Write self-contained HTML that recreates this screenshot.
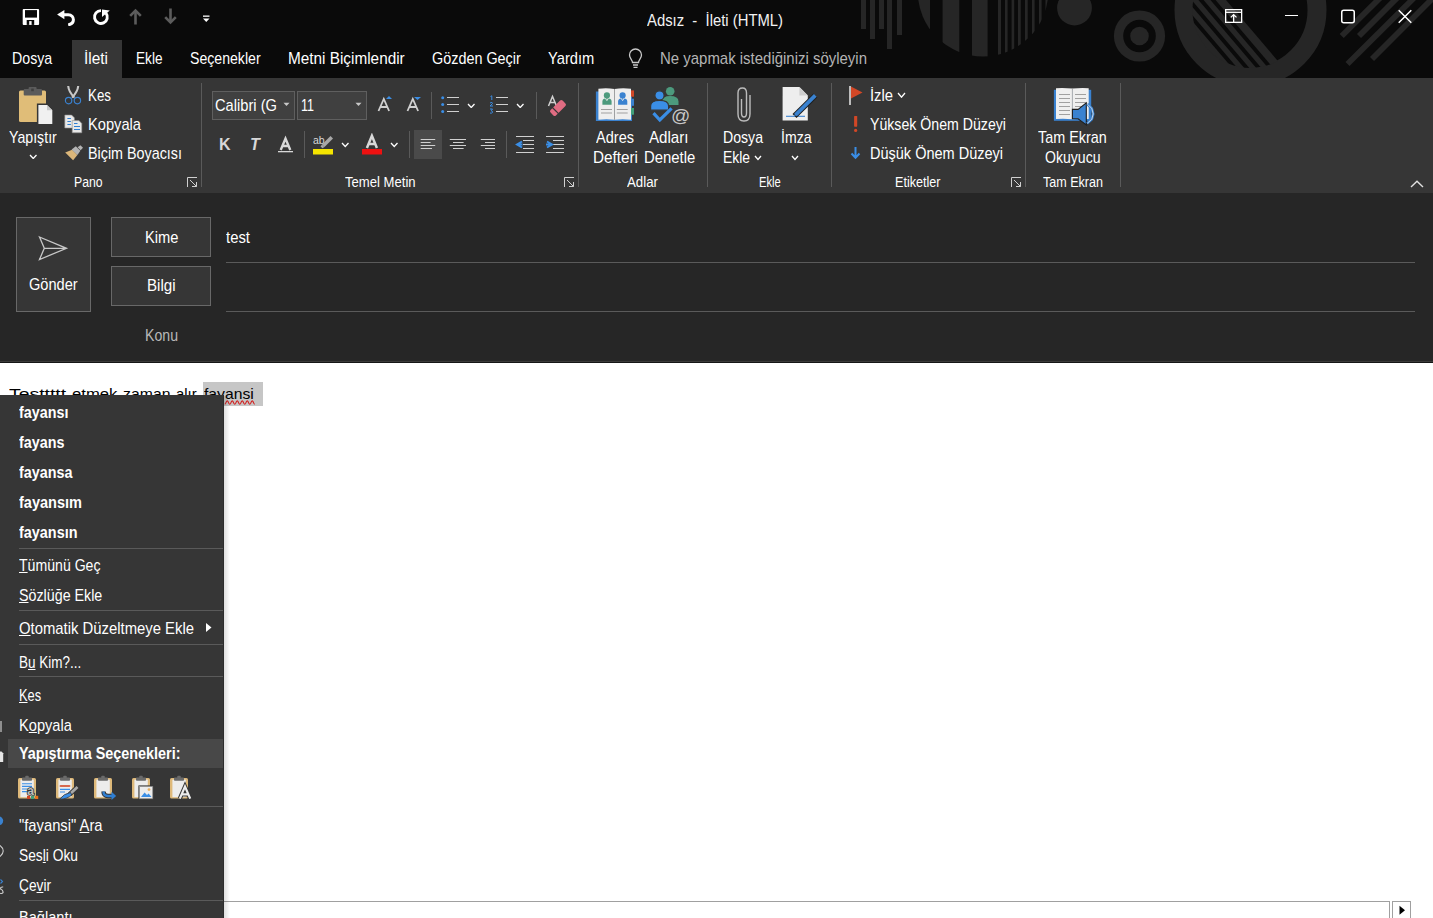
<!DOCTYPE html>
<html><head><meta charset="utf-8">
<style>
html,body{margin:0;padding:0;}
body{width:1433px;height:918px;overflow:hidden;position:relative;background:#fff;font-family:"Liberation Sans", sans-serif;}
.r{position:absolute;}
.t{position:absolute;white-space:pre;line-height:normal;transform-origin:0 0;}
</style></head><body>
<div class="r" style="left:0px;top:0px;width:1433px;height:78px;background:#0a0a0a;"></div>
<svg class="r" style="left:0px;top:0px;" width="1433" height="78" viewBox="0 0 1433 78">
<defs>
 <clipPath id="c1"><circle cx="983" cy="-8.8" r="65.3"></circle></clipPath>
 <clipPath id="c2"><circle cx="1250.5" cy="10" r="58"></circle></clipPath>
 <clipPath id="cb"><rect x="0" y="0" width="1433" height="78"></rect></clipPath>
</defs>
<g fill="#262626" clip-path="url(#cb)">
 <rect x="861" y="0" width="5" height="29"></rect>
 <rect x="870" y="0" width="5" height="39"></rect>
 <rect x="879" y="0" width="5" height="29"></rect>
 <rect x="887" y="0" width="5" height="49"></rect>
 <rect x="897" y="0" width="5" height="35"></rect>
 <g clip-path="url(#c1)">
  <rect x="915" y="-80" width="15" height="140"></rect>
  <rect x="942.6" y="-80" width="16.7" height="140"></rect>
  <rect x="972" y="-80" width="15.6" height="140"></rect>
  <rect x="998" y="-80" width="3" height="140"></rect>
  <rect x="1005" y="-80" width="2.6" height="140"></rect>
  <rect x="1011.6" y="-80" width="2.6" height="140"></rect>
  <rect x="1018" y="-80" width="2.8" height="140"></rect>
  <rect x="1025" y="-80" width="2.7" height="140"></rect>
  <rect x="1032" y="-80" width="2.6" height="140"></rect>
  <rect x="1039" y="-80" width="2.6" height="140"></rect>
  <rect x="1045.5" y="-80" width="3" height="140"></rect>
 </g>
 <circle cx="1074.5" cy="8" r="17.4"></circle>
 <circle cx="1139.5" cy="36" r="25.6"></circle>
 <circle cx="1139.5" cy="36" r="16.3" fill="#0a0a0a"></circle>
 <circle cx="1139.5" cy="36" r="9.3"></circle>
 <circle cx="1250.5" cy="10" r="66.5" fill="none" stroke="#262626" stroke-width="19"></circle>
 <g clip-path="url(#c2)">
  <path d="M1140 -10 L1217.5 -10 L1294.0 80 L1140 90Z" fill="#262626"></path>
  <g stroke="#0a0a0a" stroke-width="3.9">
   <line x1="1168.5" y1="-10" x2="1245" y2="80"></line>
   <line x1="1180.5" y1="-10" x2="1257" y2="80"></line>
   <line x1="1192.5" y1="-10" x2="1269" y2="80"></line>
   <line x1="1204.5" y1="-10" x2="1281" y2="80"></line>
  </g>
 </g>
 <g stroke="#262626" stroke-width="5.8">
  <line x1="1341.7" y1="36" x2="1380" y2="-2"></line>
  <line x1="1359" y1="36" x2="1398" y2="-3"></line>
  <line x1="1347.5" y1="64" x2="1440" y2="-28"></line>
  <line x1="1372" y1="59" x2="1440" y2="-9"></line>
 </g>
</g></svg>
<svg class="r" style="left:22px;top:8px;" width="18" height="18" viewBox="0 0 18 18"><path fill="#fff" d="M1.7 0.9H16.1a1 1 0 0 1 1 1V15.9a1 1 0 0 1-1 1H1.7a1 1 0 0 1-1-1V1.9a1 1 0 0 1 1-1z"></path>
<rect x="3" y="2.1" width="12" height="7.5" fill="#0a0a0a"></rect>
<rect x="4.7" y="12" width="7.5" height="4.9" fill="#0a0a0a"></rect>
<rect x="7.2" y="13.1" width="2.4" height="3.8" fill="#fff"></rect></svg>
<svg class="r" style="left:56px;top:8px;" width="20" height="18" viewBox="0 0 20 18"><path d="M1.1 6.6 L8.4 1.9 L8.4 11.2 Z" fill="#fff"></path>
<path d="M7 6.8 H12.3 C15.6 6.8 17.4 9.1 17.4 11.8 C17.4 14.6 15.4 16.3 12.2 16.9" fill="none" stroke="#fff" stroke-width="3"></path></svg>
<svg class="r" style="left:92px;top:8px;" width="20" height="18" viewBox="0 0 20 18"><path d="M9 2.6 A6.4 6.4 0 1 0 14 5.1" fill="none" stroke="#fff" stroke-width="2.9"></path>
<path d="M10 1.6 L17.8 2.6 L10 8.9 Z" fill="#fff"></path></svg>
<svg class="r" style="left:129px;top:8px;" width="14" height="17" viewBox="0 0 14 17"><g fill="none" stroke="#5c5c5c" stroke-width="2.6"><path d="M6.5 16.5V3"></path><path d="M1.2 7.8 L6.5 2.5 L11.8 7.8"></path></g></svg>
<svg class="r" style="left:164px;top:8px;" width="14" height="17" viewBox="0 0 14 17"><g fill="none" stroke="#5c5c5c" stroke-width="2.6"><path d="M6.5 0.5V14"></path><path d="M1.2 9.2 L6.5 14.5 L11.8 9.2"></path></g></svg>
<svg class="r" style="left:202px;top:14px;" width="9" height="9" viewBox="0 0 9 9"><rect x="1" y="1.5" width="6.5" height="1.3" fill="#fff"></rect><path d="M1 4.5H7.5L4.25 8z" fill="#fff"></path></svg>
<div class="t" style="left: 647px; top: 11.57px; font-size: 15.9px; color: rgb(242, 242, 242); transform: scaleX(0.9335);">Adsız  -  İleti (HTML)</div>
<svg class="r" style="left:1223px;top:8px;" width="21" height="17" viewBox="0 0 21 17"><g fill="none" stroke="#fff" stroke-width="1.3"><rect x="2.65" y="1.65" width="16" height="12.7"></rect><path d="M2.65 4.3H18.65"></path><path d="M10.65 14V6.6M7.8 9.4L10.65 6.6L13.5 9.4"></path></g></svg>
<div class="r" style="left:1284.5px;top:14.5px;width:13px;height:1.2px;background:#fff;"></div>
<svg class="r" style="left:1340px;top:9px;" width="16" height="15" viewBox="0 0 16 15"><rect x="1.75" y="1.25" width="12.5" height="12.5" rx="2" fill="none" stroke="#fff" stroke-width="1.5"></rect></svg>
<svg class="r" style="left:1397px;top:9px;" width="16" height="15" viewBox="0 0 16 15"><path d="M1.7 1.2 L14.3 13.8 M14.3 1.2 L1.7 13.8" stroke="#fff" stroke-width="1.5"></path></svg>
<div class="r" style="left:72px;top:40px;width:50px;height:38px;background:#363636;"></div>
<div class="t" style="left: 12.4px; top: 50.46px; font-size: 15.7px; color: rgb(255, 255, 255); transform: scaleX(0.904);">Dosya</div>
<div class="t" style="left: 84.4px; top: 50.46px; font-size: 15.7px; color: rgb(255, 255, 255); transform: scaleX(0.9827);">İleti</div>
<div class="t" style="left: 136.3px; top: 50.46px; font-size: 15.7px; color: rgb(255, 255, 255); transform: scaleX(0.868);">Ekle</div>
<div class="t" style="left: 190px; top: 50.46px; font-size: 15.7px; color: rgb(255, 255, 255); transform: scaleX(0.8995);">Seçenekler</div>
<div class="t" style="left: 288px; top: 50.46px; font-size: 15.7px; color: rgb(255, 255, 255); transform: scaleX(0.9771);">Metni Biçimlendir</div>
<div class="t" style="left: 431.8px; top: 50.46px; font-size: 15.7px; color: rgb(255, 255, 255); transform: scaleX(0.9174);">Gözden Geçir</div>
<div class="t" style="left: 548px; top: 50.46px; font-size: 15.7px; color: rgb(255, 255, 255); transform: scaleX(0.9371);">Yardım</div>
<svg class="r" style="left:626px;top:48px;" width="20" height="22" viewBox="0 0 20 22"><g fill="none" stroke="#c8c8c8" stroke-width="1.3"><path d="M6.5 14.5 C6.5 12 3.5 10.5 3.5 7 A6 6 0 0 1 15.5 7 C15.5 10.5 12.5 12 12.5 14.5 Z"></path><path d="M7 17H12M7.5 19.3H11.5"></path></g></svg>
<div class="t" style="left: 660.3px; top: 50.46px; font-size: 15.7px; color: rgb(180, 180, 180); transform: scaleX(0.9534);">Ne yapmak istediğinizi söyleyin</div>
<div class="r" style="left:0px;top:78px;width:1433px;height:115px;background:#363636;"></div>
<svg class="r" style="left:18px;top:86px;" width="36" height="40" viewBox="0 0 36 40">
<rect x="1" y="4.6" width="27" height="31.4" rx="1.5" fill="#e0bd78"></rect>
<rect x="5.7" y="3" width="18.3" height="6.4" rx="1" fill="#5b5b5b"></rect>
<rect x="10.6" y="1" width="8" height="5" rx="1" fill="#5b5b5b"></rect>
<rect x="13.2" y="2.6" width="2.6" height="2.6" fill="#404040"></rect>
<path d="M18.9 17.5 H29.5 L35.8 23.8 V39.5 H18.9 Z" fill="#363636"></path>
<path d="M20.4 19 H29 L34.3 24.3 V38 H20.4 Z" fill="#f0f0f0"></path>
<path d="M29 19 V24.3 H34.3" fill="#c8c8c8"></path></svg>
<div class="t" style="left: 8.7px; top: 128.56px; font-size: 15.7px; color: rgb(255, 255, 255); transform: scaleX(0.9035);">Yapıştır</div>
<svg class="r" style="left:29px;top:153.5px;" width="8.5" height="5.5" viewBox="0 0 8.5 5.5"><path d="M1 1 L4.25 4.5 L7.5 1" fill="none" stroke="#fff" stroke-width="1.3"></path></svg>
<svg class="r" style="left:64px;top:85px;" width="19" height="20" viewBox="0 0 19 20"><g fill="none">
<path d="M4.2 1 Q4.6 6.5 10.4 12.6" stroke="#c8c8c8" stroke-width="2.1"></path>
<path d="M14.2 1 Q13.8 6.5 8 12.6" stroke="#c8c8c8" stroke-width="2.1"></path>
<circle cx="4.6" cy="15.6" r="3.2" stroke="#3a82d0" stroke-width="1.15"></circle>
<circle cx="13.4" cy="15.6" r="3.2" stroke="#3a82d0" stroke-width="1.15"></circle></g></svg>
<div class="t" style="left: 88px; top: 86.86px; font-size: 15.7px; color: rgb(255, 255, 255); transform: scaleX(0.8504);">Kes</div>
<svg class="r" style="left:64px;top:114px;" width="20" height="20" viewBox="0 0 20 20">
<path d="M0.8 1 H7.6 L10.4 3.8 V14 H0.8 Z" fill="#e8e8e8" stroke="#8a8a8a" stroke-width="0.6"></path>
<path d="M3.4 4.5H6.9M3.4 7.5H6.9M3.4 10.5H6.9" stroke="#2f7fd3" stroke-width="1.1"></path>
<path d="M8.2 6.6 H15 L17.8 9.4 V18.8 H8.2 Z" fill="#e8e8e8" stroke="#8a8a8a" stroke-width="0.6"></path>
<path d="M10 9.5H13.5M10 12.5H16M10 15.5H16" stroke="#2f7fd3" stroke-width="1.1"></path></svg>
<div class="t" style="left: 88px; top: 115.96px; font-size: 15.7px; color: rgb(255, 255, 255); transform: scaleX(0.9347);">Kopyala</div>
<svg class="r" style="left:64px;top:144px;" width="20" height="18" viewBox="0 0 20 18">
<path d="M1.2 8.4 L8.2 5.8 L13.4 11 L9.1 16.3 Z" fill="#dcb77a"></path>
<path d="M7.6 5.4 L11.8 2.2 L16.4 6.8 L13.4 11 Z" fill="#b4b4b4"></path>
<path d="M13.6 3.2 L16.4 1.2 L19 3.8 L16.6 6.2 Z" fill="#b4b4b4"></path></svg>
<div class="t" style="left: 88px; top: 145.16px; font-size: 15.7px; color: rgb(255, 255, 255); transform: scaleX(0.9137);">Biçim Boyacısı</div>
<div class="t" style="left: 74px; top: 175.3px; font-size: 13.8px; color: rgb(255, 255, 255); transform: scaleX(0.8873);">Pano</div>
<svg class="r" style="left:187px;top:177px;" width="11" height="11" viewBox="0 0 11 11"><g fill="none" stroke="#d0d0d0" stroke-width="1"><path d="M0.5 10V0.5H10"></path><path d="M3 3L9.5 9.5M5 9.5H9.5V5"></path></g></svg>
<div class="r" style="left:201px;top:83px;width:1px;height:104px;background:#5a5a5a;"></div>
<div class="r" style="left:212px;top:91px;width:83px;height:29px;background:#404040;box-sizing:border-box;border:1px solid #5f5f5f;"></div>
<div class="r" style="left:297px;top:91px;width:70px;height:29px;background:#404040;box-sizing:border-box;border:1px solid #5f5f5f;"></div>
<div class="t" style="left: 215px; top: 96.76px; font-size: 15.7px; color: rgb(255, 255, 255); transform: scaleX(0.9358);">Calibri (G</div>
<svg class="r" style="left:283px;top:102px;" width="7" height="5" viewBox="0 0 7 5"><path d="M0.5 0.8H6.5L3.5 4z" fill="#c8c8c8"></path></svg>
<div class="t" style="left: 301px; top: 96.76px; font-size: 15.7px; color: rgb(255, 255, 255); transform: scaleX(0.7977);">11</div>
<svg class="r" style="left:354.5px;top:102px;" width="7" height="5" viewBox="0 0 7 5"><path d="M0.5 0.8H6.5L3.5 4z" fill="#c8c8c8"></path></svg>
<svg class="r" style="left:376px;top:94px;" width="18" height="19" viewBox="0 0 18 19"><path d="M2.5 17 L7.8 5 L13.1 17 M4.6 13H11" fill="none" stroke="#d0d0d0" stroke-width="1.8"></path><path d="M10 5H16L13 2z" fill="#3a8ee6"></path></svg>
<svg class="r" style="left:405px;top:94px;" width="18" height="19" viewBox="0 0 18 19"><path d="M2.5 17 L7.8 5 L13.1 17 M4.6 13H11" fill="none" stroke="#d0d0d0" stroke-width="1.8"></path><path d="M9 3H16L12.5 6z" fill="#3a8ee6"></path></svg>
<div class="r" style="left:431px;top:92px;width:1px;height:27px;background:#5a5a5a;"></div>
<svg class="r" style="left:440px;top:95px;" width="21" height="19" viewBox="0 0 21 19"><g fill="#3a8ee6"><circle cx="2.7" cy="2.8" r="1.5"></circle><circle cx="2.7" cy="9.6" r="1.5"></circle><circle cx="2.7" cy="16.4" r="1.5"></circle></g>
<path d="M7 2.5H19M7 9.5H19M7 16.5H19" stroke="#d0d0d0" stroke-width="1.1"></path></svg>
<svg class="r" style="left:467px;top:102.5px;" width="8.5" height="5.5" viewBox="0 0 8.5 5.5"><path d="M1 1 L4.25 4.5 L7.5 1" fill="none" stroke="#fff" stroke-width="1.3"></path></svg>
<svg class="r" style="left:488px;top:95px;" width="21" height="19" viewBox="0 0 21 19"><g fill="none" stroke="#3a8ee6" stroke-width="1"><path d="M2.5 1.5 L3.8 0.8 V5"></path><path d="M2 8 Q4.5 6.5 4.5 8.5 L2 11 H5"></path><path d="M2 14 H4.5 L3.2 15.8 Q5 16 4.4 17.6 Q3.5 18.6 2 18"></path></g>
<path d="M8 2.5H20M8 9.5H20M8 16.5H20" stroke="#d0d0d0" stroke-width="1.1"></path></svg>
<svg class="r" style="left:516px;top:102.5px;" width="8.5" height="5.5" viewBox="0 0 8.5 5.5"><path d="M1 1 L4.25 4.5 L7.5 1" fill="none" stroke="#fff" stroke-width="1.3"></path></svg>
<div class="r" style="left:536px;top:92px;width:1px;height:27px;background:#5a5a5a;"></div>
<svg class="r" style="left:546px;top:94px;" width="22" height="23" viewBox="0 0 22 23"><path d="M2.5 12 L6.5 2.5 L10.5 12 M4 8.5H9" fill="none" stroke="#d0d0d0" stroke-width="1.5"></path>
<g transform="rotate(45 12 14)"><rect x="8.2" y="5.5" width="7.6" height="17" rx="1.8" fill="#e06c82"></rect><rect x="7" y="17" width="10" height="1.2" fill="#363636"></rect></g></svg>
<svg class="r" style="left:217px;top:136px;" width="17" height="16" viewBox="0 0 17 16"><text x="2" y="14" font-family="Liberation Sans" font-weight="700" font-size="16" fill="#d8d8d8">K</text></svg>
<svg class="r" style="left:247px;top:136px;" width="17" height="16" viewBox="0 0 17 16"><text x="3" y="14" font-family="Liberation Sans" font-weight="700" font-style="italic" font-size="16" fill="#d8d8d8">T</text></svg>
<svg class="r" style="left:276px;top:135px;" width="20" height="19" viewBox="0 0 20 19"><path d="M4.7 15 L9.5 3.6 L14.3 15 M6.3 11H12.7" fill="none" stroke="#d8d8d8" stroke-width="2.4"></path><rect x="2" y="16" width="15" height="1.3" fill="#d8d8d8"></rect></svg>
<div class="r" style="left:304px;top:131px;width:1px;height:27px;background:#5a5a5a;"></div>
<svg class="r" style="left:312px;top:134px;" width="23" height="21" viewBox="0 0 23 21"><text x="1" y="9.5" font-family="Liberation Sans" font-size="10.5" fill="#d8d8d8">ab</text>
<path d="M18.5 2 L21 4.5 L12.5 13 L10 10.5 Z" fill="#a8a8a8"></path>
<path d="M10 10.5 L12.5 13 L10.5 14.2 L8.5 12.5Z" fill="#a8a8a8"></path>
<rect x="1" y="15" width="20" height="5.5" fill="#f4e400"></rect></svg>
<svg class="r" style="left:341px;top:142px;" width="8.5" height="5.5" viewBox="0 0 8.5 5.5"><path d="M1 1 L4.25 4.5 L7.5 1" fill="none" stroke="#fff" stroke-width="1.3"></path></svg>
<svg class="r" style="left:360px;top:133px;" width="24" height="22" viewBox="0 0 24 22"><path d="M6.9 15 L11.9 2.8 L16.9 15 M8.7 10.9H15.1" fill="none" stroke="#d8d8d8" stroke-width="2.5"></path>
<rect x="2" y="16" width="20" height="5.5" fill="#ee1111"></rect></svg>
<svg class="r" style="left:390px;top:142px;" width="8.5" height="5.5" viewBox="0 0 8.5 5.5"><path d="M1 1 L4.25 4.5 L7.5 1" fill="none" stroke="#fff" stroke-width="1.3"></path></svg>
<div class="r" style="left:409px;top:131px;width:1px;height:27px;background:#5a5a5a;"></div>
<div class="r" style="left:414px;top:130px;width:28px;height:28.6px;background:#4a4a4a;"></div>
<svg class="r" style="left:420px;top:137px;" width="17" height="16" viewBox="0 0 17 16"><path d="M0.7 2.5H15.2M0.7 5.5H10.6M0.7 8.5H15.2M0.7 11.5H12" stroke="#d0d0d0" stroke-width="1.1"></path></svg>
<svg class="r" style="left:449px;top:137px;" width="18" height="16" viewBox="0 0 18 16"><path d="M0.8 2.5H17M4 5.5H14.6M0.8 8.5H17M4 11.5H14.6" stroke="#d0d0d0" stroke-width="1.1"></path></svg>
<svg class="r" style="left:480px;top:137px;" width="17" height="16" viewBox="0 0 17 16"><path d="M0.8 2.5H15M5 5.5H15M0.8 8.5H15M5 11.5H15" stroke="#d0d0d0" stroke-width="1.1"></path></svg>
<div class="r" style="left:506px;top:131px;width:1px;height:27px;background:#5a5a5a;"></div>
<svg class="r" style="left:515px;top:135px;" width="20" height="19" viewBox="0 0 20 19"><path d="M1 1.5H19M8 5.5H19M8 9.5H19M8 13.5H19M1 17.5H19" stroke="#d0d0d0" stroke-width="1.2"></path>
<path d="M7 6.5 L2 9.5 L7 12.5 M2.5 9.5H7.5" fill="none" stroke="#3a8ee6" stroke-width="2"></path></svg>
<svg class="r" style="left:545px;top:135px;" width="20" height="19" viewBox="0 0 20 19"><path d="M1 1.5H19M8 5.5H19M8 9.5H19M8 13.5H19M1 17.5H19" stroke="#d0d0d0" stroke-width="1.2"></path>
<path d="M2 6.5 L7 9.5 L2 12.5 M1 9.5H6" fill="none" stroke="#3a8ee6" stroke-width="2"></path></svg>
<div class="t" style="left: 345px; top: 175.3px; font-size: 13.8px; color: rgb(255, 255, 255); transform: scaleX(0.9492);">Temel Metin</div>
<svg class="r" style="left:563.5px;top:177px;" width="11" height="11" viewBox="0 0 11 11"><g fill="none" stroke="#d0d0d0" stroke-width="1"><path d="M0.5 10V0.5H10"></path><path d="M3 3L9.5 9.5M5 9.5H9.5V5"></path></g></svg>
<div class="r" style="left:578px;top:83px;width:1px;height:104px;background:#5a5a5a;"></div>
<svg class="r" style="left:594px;top:86px;" width="42" height="37" viewBox="0 0 42 37">
<path d="M1.9 5.5 H38 V35 H1.9Z" fill="#3a82d0"></path>
<path d="M4.4 2.8 Q12.5 1.8 20.5 3 V33.7 Q12.5 32.6 4.4 33.7Z" fill="#eeeeee"></path>
<path d="M20.5 3 Q28.5 1.8 37 2.8 V33.7 Q28.5 32.6 20.5 33.7Z" fill="#eeeeee"></path>
<path d="M20.5 3 V33.7" stroke="#9a9a9a" stroke-width="0.9"></path>
<rect x="37" y="4.4" width="3" height="6.3" fill="#d24726"></rect>
<rect x="37" y="12.7" width="3" height="7.1" fill="#3a82d0"></rect>
<rect x="37" y="22" width="3" height="6.7" fill="#41a07a"></rect>
<circle cx="12.9" cy="9.4" r="3.1" fill="#4c9a7d"></circle><path d="M8.4 18.8 V15.5 Q8.4 12.2 12.9 12.2 Q17.6 12.2 17.6 15.5 V18.8Z" fill="#4c9a7d"></path>
<path d="M11.4 12.3 L12.9 14.6 L14.4 12.3" fill="none" stroke="#eeeeee" stroke-width="0.9"></path>
<circle cx="28.6" cy="9.4" r="3.1" fill="#3a82d0"></circle><path d="M24.1 18.8 V15.5 Q24.1 12.2 28.6 12.2 Q33.3 12.2 33.3 15.5 V18.8Z" fill="#3a82d0"></path>
<path d="M27.1 12.3 L28.6 14.6 L30.1 12.3" fill="none" stroke="#eeeeee" stroke-width="0.9"></path>
<path d="M7 23.5H18M7 27H18M22.8 23.5H33.7M22.8 27H33.7" stroke="#a0a0a0" stroke-width="1"></path></svg>
<svg class="r" style="left:649px;top:85px;" width="42" height="41" viewBox="0 0 42 41">
<circle cx="21.2" cy="6.2" r="4.3" fill="#4c9a7d"></circle><path d="M13.2 20 V16.5 Q13.2 11 21.2 11 Q29.5 11 29.5 16.5 V20Z" fill="#4c9a7d"></path>
<circle cx="10.5" cy="10.4" r="4.6" fill="#3a8ee6" stroke="#363636" stroke-width="1.2"></circle>
<path d="M1.6 25.2 V21 Q1.6 15.4 10.5 15.4 Q19.6 15.4 19.6 21 V25.2Z" fill="#3a8ee6" stroke="#363636" stroke-width="1.2"></path>
<path d="M4.5 28.2 L10.8 35 L22.6 23.4" fill="none" stroke="#3a8ee6" stroke-width="3.2"></path>
<text x="22" y="37.3" font-family="Liberation Sans" font-size="19" fill="#c8c8c8">@</text></svg>
<div class="t" style="left: 596px; top: 128.56px; font-size: 15.7px; color: rgb(255, 255, 255); transform: scaleX(0.9272);">Adres</div>
<div class="t" style="left: 592.7px; top: 148.56px; font-size: 15.7px; color: rgb(255, 255, 255); transform: scaleX(0.9736);">Defteri</div>
<div class="t" style="left: 649px; top: 128.56px; font-size: 15.7px; color: rgb(255, 255, 255); transform: scaleX(0.9638);">Adları</div>
<div class="t" style="left: 643.5px; top: 148.56px; font-size: 15.7px; color: rgb(255, 255, 255); transform: scaleX(0.9468);">Denetle</div>
<div class="t" style="left: 627px; top: 175.3px; font-size: 13.8px; color: rgb(255, 255, 255); transform: scaleX(0.9622);">Adlar</div>
<div class="r" style="left:707px;top:83px;width:1px;height:104px;background:#5a5a5a;"></div>
<svg class="r" style="left:735px;top:86px;" width="18" height="38" viewBox="0 0 18 38"><path d="M6.5 13 V27 Q6.5 31 9 31 Q11.5 31 11.5 27 V7 Q11.5 2 7.5 2 Q3 2 3 7 V28 Q3 35 9 35 Q15 35 15 28 V9" fill="none" stroke="#bcbcbc" stroke-width="1.4"></path></svg>
<div class="t" style="left: 723px; top: 128.56px; font-size: 15.7px; color: rgb(255, 255, 255); transform: scaleX(0.8995);">Dosya</div>
<div class="t" style="left: 723px; top: 148.56px; font-size: 15.7px; color: rgb(255, 255, 255); transform: scaleX(0.8843);">Ekle</div>
<svg class="r" style="left:753.5px;top:155px;" width="8" height="5.5" viewBox="0 0 8 5.5"><path d="M1 1 L4.0 4.5 L7 1" fill="none" stroke="#fff" stroke-width="1.3"></path></svg>
<svg class="r" style="left:782px;top:86px;" width="36" height="37" viewBox="0 0 36 37">
<path d="M0.6 1 H17.4 L25.8 9.4 V34.5 H0.6Z" fill="#eeeeee"></path>
<path d="M17.4 1 V9.4 H25.8" fill="#cfcfcf"></path>
<path d="M4 30.3 H23" stroke="#3a82d0" stroke-width="1.1"></path>
<path d="M33.3 9.4 L12.5 30" stroke="#1e1e1e" stroke-width="5.6"></path>
<path d="M33.3 9.4 L13.5 29" stroke="#3a82d0" stroke-width="3.8"></path>
<path d="M14.5 25.6 L17 28.1 L11.5 30.6Z" fill="#3a82d0"></path></svg>
<div class="t" style="left: 780.5px; top: 128.56px; font-size: 15.7px; color: rgb(255, 255, 255); transform: scaleX(0.8971);">İmza</div>
<svg class="r" style="left:791px;top:155px;" width="8" height="5.5" viewBox="0 0 8 5.5"><path d="M1 1 L4.0 4.5 L7 1" fill="none" stroke="#fff" stroke-width="1.3"></path></svg>
<div class="t" style="left: 758.7px; top: 175.3px; font-size: 13.8px; color: rgb(255, 255, 255); transform: scaleX(0.8121);">Ekle</div>
<div class="r" style="left:831px;top:83px;width:1px;height:104px;background:#5a5a5a;"></div>
<svg class="r" style="left:847px;top:85px;" width="18" height="21" viewBox="0 0 18 21"><rect x="2" y="1" width="2" height="19" fill="#bcbcbc"></rect><path d="M4 1.5 L15.5 7.5 L4 13.5Z" fill="#d24726"></path></svg>
<div class="t" style="left: 870px; top: 86.96px; font-size: 15.7px; color: rgb(255, 255, 255); transform: scaleX(0.9418);">İzle</div>
<svg class="r" style="left:896.5px;top:91.5px;" width="9" height="6.2" viewBox="0 0 9 6.2"><path d="M1 1 L4.5 5.2 L8 1" fill="none" stroke="#fff" stroke-width="1.3"></path></svg>
<svg class="r" style="left:852px;top:115px;" width="7" height="18" viewBox="0 0 7 18"><rect x="2.1" y="1" width="3.1" height="10.7" rx="0.6" fill="#d24726"></rect><circle cx="3.65" cy="15.4" r="1.6" fill="#d24726"></circle></svg>
<div class="t" style="left: 870px; top: 115.86px; font-size: 15.7px; color: rgb(255, 255, 255); transform: scaleX(0.9016);">Yüksek Önem Düzeyi</div>
<svg class="r" style="left:850px;top:146px;" width="11" height="14" viewBox="0 0 11 14"><path d="M5.5 1V11.5M1.5 7.5L5.5 11.8L9.5 7.5" fill="none" stroke="#3a8ee6" stroke-width="2"></path></svg>
<div class="t" style="left: 870px; top: 144.76px; font-size: 15.7px; color: rgb(255, 255, 255); transform: scaleX(0.9245);">Düşük Önem Düzeyi</div>
<div class="t" style="left: 895px; top: 175.3px; font-size: 13.8px; color: rgb(255, 255, 255); transform: scaleX(0.9129);">Etiketler</div>
<svg class="r" style="left:1010.5px;top:177px;" width="11" height="11" viewBox="0 0 11 11"><g fill="none" stroke="#d0d0d0" stroke-width="1"><path d="M0.5 10V0.5H10"></path><path d="M3 3L9.5 9.5M5 9.5H9.5V5"></path></g></svg>
<div class="r" style="left:1025px;top:83px;width:1px;height:104px;background:#5a5a5a;"></div>
<svg class="r" style="left:1052px;top:85px;" width="44" height="42" viewBox="0 0 44 42">
<rect x="1.9" y="4.8" width="37.3" height="31" fill="#3a82d0"></rect>
<path d="M4 3.2 Q12 2.6 20.4 3.6 V34.2 Q12 33.4 4 34Z" fill="#efefef"></path>
<path d="M20.4 3.6 Q28.5 2.6 36.7 3.2 V34 Q28.5 33.4 20.4 34.2Z" fill="#efefef"></path>
<path d="M20.4 3.6V34" stroke="#a8a8a8" stroke-width="0.9"></path>
<path d="M7 9.5H18M7 13.5H18M7 17.5H18M7 21.5H18M7 25.5H18M7 29.5H18M23 9.5H34M23 13.5H34M23 17.5H34M23 21.5H34" stroke="#a0a0a0" stroke-width="1"></path>
<path d="M20.4 24.4 H26.1 L34.3 17.9 V39.9 L26.1 33.7 H20.4Z" fill="#3a82d0" stroke="#1e1e1e" stroke-width="1.1"></path>
<path d="M35.2 19 L39.8 23.4 L41.2 28.9 L39.8 34.2 L35.2 38.4" fill="none" stroke="#3a82d0" stroke-width="2.6"></path>
<path d="M35.2 19 L39.8 23.4 L41.2 28.9 L39.8 34.2 L35.2 38.4" fill="none" stroke="#e8e8e8" stroke-width="0.8"></path></svg>
<div class="t" style="left: 1038px; top: 128.56px; font-size: 15.7px; color: rgb(255, 255, 255); transform: scaleX(0.9162);">Tam Ekran</div>
<div class="t" style="left: 1045px; top: 148.56px; font-size: 15.7px; color: rgb(255, 255, 255); transform: scaleX(0.8963);">Okuyucu</div>
<div class="t" style="left: 1042.5px; top: 175.3px; font-size: 13.8px; color: rgb(255, 255, 255); transform: scaleX(0.9097);">Tam Ekran</div>
<div class="r" style="left:1120px;top:83px;width:1px;height:104px;background:#5a5a5a;"></div>
<svg class="r" style="left:1410px;top:180px;" width="14" height="8" viewBox="0 0 14 8"><path d="M1 7 L7 1.2 L13 7" fill="none" stroke="#e0e0e0" stroke-width="1.4"></path></svg>
<div class="r" style="left:0px;top:193px;width:1433px;height:168px;background:#262626;"></div>
<div class="r" style="left:0px;top:361px;width:1433px;height:1px;background:#3b3a39;"></div>
<div class="r" style="left:0px;top:362px;width:1433px;height:1px;background:#161616;"></div>
<div class="r" style="left:16px;top:217px;width:75px;height:95px;background:#363636;box-sizing:border-box;border:1px solid #686868;"></div>
<svg class="r" style="left:37px;top:235px;" width="32" height="27" viewBox="0 0 32 27"><path d="M2.5 2 L29.5 13.3 L2.5 24.5 L7.3 13.3 Z M7.3 13.3 H29.5" fill="none" stroke="#c8c8c8" stroke-width="1.3" stroke-linejoin="miter"></path></svg>
<div class="t" style="left: 29px; top: 275.56px; font-size: 15.7px; color: rgb(255, 255, 255); transform: scaleX(0.9307);">Gönder</div>
<div class="r" style="left:111px;top:217px;width:100px;height:40px;background:#363636;box-sizing:border-box;border:1px solid #686868;"></div>
<div class="r" style="left:111px;top:266px;width:100px;height:40px;background:#363636;box-sizing:border-box;border:1px solid #686868;"></div>
<div class="t" style="left: 144.5px; top: 228.56px; font-size: 15.7px; color: rgb(255, 255, 255); transform: scaleX(0.9371);">Kime</div>
<div class="t" style="left: 146.7px; top: 277.16px; font-size: 15.7px; color: rgb(255, 255, 255); transform: scaleX(0.9644);">Bilgi</div>
<div class="t" style="left: 144.5px; top: 326.86px; font-size: 15.7px; color: rgb(184, 184, 184); transform: scaleX(0.9006);">Konu</div>
<div class="t" style="left: 226px; top: 228.96px; font-size: 15.7px; color: rgb(255, 255, 255); transform: scaleX(0.9487);">test</div>
<div class="r" style="left:226px;top:262px;width:1189px;height:1.2px;background:#5a5a5a;"></div>
<div class="r" style="left:226px;top:311px;width:1189px;height:1.2px;background:#5a5a5a;"></div>
<div class="r" style="left:203px;top:382px;width:60px;height:24px;background:#c6c6c6;"></div>
<div class="t" style="left: 9.3px; top: 386.17px; font-size: 14.6px; color: rgb(0, 0, 0); transform: scaleX(1.3284);">Testtttt</div>
<div class="t" style="left: 71.8px; top: 386.17px; font-size: 14.6px; color: rgb(0, 0, 0); transform: scaleX(1.1421);">etmek</div>
<div class="t" style="left: 122.5px; top: 386.17px; font-size: 14.6px; color: rgb(0, 0, 0); transform: scaleX(1.0842);">zaman</div>
<div class="t" style="left: 176px; top: 386.17px; font-size: 14.6px; color: rgb(0, 0, 0); transform: scaleX(1.0206);">alır</div>
<div class="t" style="left: 203.8px; top: 386.17px; font-size: 14.6px; color: rgb(0, 0, 0); transform: scaleX(1.0768);">fayansi</div>
<svg class="r" style="left:224px;top:399px;" width="33" height="7" viewBox="0 0 33 7"><path d="M0.80 5.10 L0.90 5.07 L1.00 5.02 L1.10 4.95 L1.20 4.85 L1.30 4.73 L1.40 4.60 L1.50 4.44 L1.60 4.27 L1.70 4.09 L1.80 3.90 L1.90 3.70 L2.00 3.50 L2.10 3.30 L2.20 3.10 L2.30 2.91 L2.40 2.73 L2.50 2.56 L2.60 2.40 L2.70 2.27 L2.80 2.15 L2.90 2.05 L3.00 1.98 L3.10 1.93 L3.20 1.90 L3.30 1.90 L3.40 1.93 L3.50 1.98 L3.60 2.05 L3.70 2.15 L3.80 2.27 L3.90 2.40 L4.00 2.56 L4.10 2.73 L4.20 2.91 L4.30 3.10 L4.40 3.30 L4.50 3.50 L4.60 3.70 L4.70 3.90 L4.80 4.09 L4.90 4.27 L5.00 4.44 L5.10 4.60 L5.20 4.73 L5.30 4.85 L5.40 4.95 L5.50 5.02 L5.60 5.07 L5.70 5.10 L5.80 5.10 L5.90 5.07 L6.00 5.02 L6.10 4.95 L6.20 4.85 L6.30 4.73 L6.40 4.60 L6.50 4.44 L6.60 4.27 L6.70 4.09 L6.80 3.90 L6.90 3.70 L7.00 3.50 L7.10 3.30 L7.20 3.10 L7.30 2.91 L7.40 2.73 L7.50 2.56 L7.60 2.40 L7.70 2.27 L7.80 2.15 L7.90 2.05 L8.00 1.98 L8.10 1.93 L8.20 1.90 L8.30 1.90 L8.40 1.93 L8.50 1.98 L8.60 2.05 L8.70 2.15 L8.80 2.27 L8.90 2.40 L9.00 2.56 L9.10 2.73 L9.20 2.91 L9.30 3.10 L9.40 3.30 L9.50 3.50 L9.60 3.70 L9.70 3.90 L9.80 4.09 L9.90 4.27 L10.00 4.44 L10.10 4.60 L10.20 4.73 L10.30 4.85 L10.40 4.95 L10.50 5.02 L10.60 5.07 L10.70 5.10 L10.80 5.10 L10.90 5.07 L11.00 5.02 L11.10 4.95 L11.20 4.85 L11.30 4.73 L11.40 4.60 L11.50 4.44 L11.60 4.27 L11.70 4.09 L11.80 3.90 L11.90 3.70 L12.00 3.50 L12.10 3.30 L12.20 3.10 L12.30 2.91 L12.40 2.73 L12.50 2.56 L12.60 2.40 L12.70 2.27 L12.80 2.15 L12.90 2.05 L13.00 1.98 L13.10 1.93 L13.20 1.90 L13.30 1.90 L13.40 1.93 L13.50 1.98 L13.60 2.05 L13.70 2.15 L13.80 2.27 L13.90 2.40 L14.00 2.56 L14.10 2.73 L14.20 2.91 L14.30 3.10 L14.40 3.30 L14.50 3.50 L14.60 3.70 L14.70 3.90 L14.80 4.09 L14.90 4.27 L15.00 4.44 L15.10 4.60 L15.20 4.73 L15.30 4.85 L15.40 4.95 L15.50 5.02 L15.60 5.07 L15.70 5.10 L15.80 5.10 L15.90 5.07 L16.00 5.02 L16.10 4.95 L16.20 4.85 L16.30 4.73 L16.40 4.60 L16.50 4.44 L16.60 4.27 L16.70 4.09 L16.80 3.90 L16.90 3.70 L17.00 3.50 L17.10 3.30 L17.20 3.10 L17.30 2.91 L17.40 2.73 L17.50 2.56 L17.60 2.40 L17.70 2.27 L17.80 2.15 L17.90 2.05 L18.00 1.98 L18.10 1.93 L18.20 1.90 L18.30 1.90 L18.40 1.93 L18.50 1.98 L18.60 2.05 L18.70 2.15 L18.80 2.27 L18.90 2.40 L19.00 2.56 L19.10 2.73 L19.20 2.91 L19.30 3.10 L19.40 3.30 L19.50 3.50 L19.60 3.70 L19.70 3.90 L19.80 4.09 L19.90 4.27 L20.00 4.44 L20.10 4.60 L20.20 4.73 L20.30 4.85 L20.40 4.95 L20.50 5.02 L20.60 5.07 L20.70 5.10 L20.80 5.10 L20.90 5.07 L21.00 5.02 L21.10 4.95 L21.20 4.85 L21.30 4.73 L21.40 4.60 L21.50 4.44 L21.60 4.27 L21.70 4.09 L21.80 3.90 L21.90 3.70 L22.00 3.50 L22.10 3.30 L22.20 3.10 L22.30 2.91 L22.40 2.73 L22.50 2.56 L22.60 2.40 L22.70 2.27 L22.80 2.15 L22.90 2.05 L23.00 1.98 L23.10 1.93 L23.20 1.90 L23.30 1.90 L23.40 1.93 L23.50 1.98 L23.60 2.05 L23.70 2.15 L23.80 2.27 L23.90 2.40 L24.00 2.56 L24.10 2.73 L24.20 2.91 L24.30 3.10 L24.40 3.30 L24.50 3.50 L24.60 3.70 L24.70 3.90 L24.80 4.09 L24.90 4.27 L25.00 4.44 L25.10 4.60 L25.20 4.73 L25.30 4.85 L25.40 4.95 L25.50 5.02 L25.60 5.07 L25.70 5.10 L25.80 5.10 L25.90 5.07 L26.00 5.02 L26.10 4.95 L26.20 4.85 L26.30 4.73 L26.40 4.60 L26.50 4.44 L26.60 4.27 L26.70 4.09 L26.80 3.90 L26.90 3.70 L27.00 3.50 L27.10 3.30 L27.20 3.10 L27.30 2.91 L27.40 2.73 L27.50 2.56 L27.60 2.40 L27.70 2.27 L27.80 2.15 L27.90 2.05 L28.00 1.98 L28.10 1.93 L28.20 1.90 L28.30 1.90 L28.40 1.93 L28.50 1.98 L28.60 2.05 L28.70 2.15 L28.80 2.27 L28.90 2.40 L29.00 2.56 L29.10 2.73 L29.20 2.91 L29.30 3.10 L29.40 3.30 L29.50 3.50 L29.60 3.70 L29.70 3.90 L29.80 4.09 L29.90 4.27 L30.00 4.44 L30.10 4.60 L30.20 4.73 L30.30 4.85 L30.40 4.95 L30.50 5.02 L30.60 5.07 L30.70 5.10 L30.80 5.10" fill="none" stroke="#d42020" stroke-width="1.1"></path></svg>
<div class="r" style="left:224px;top:901px;width:1166px;height:1px;background:#a0a0a0;"></div>
<div class="r" style="left:1389px;top:901px;width:1px;height:17px;background:#a0a0a0;"></div>
<div class="r" style="left:1392px;top:901px;width:19px;height:17px;background:#fff;box-sizing:border-box;border:1px solid #a0a0a0;border-bottom:none;"></div>
<svg class="r" style="left:1398px;top:905px;" width="9" height="11" viewBox="0 0 9 11"><path d="M1.5 0.8 L7 5.3 L1.5 9.8Z" fill="#000"></path></svg>
<div class="r" style="left:224px;top:396px;width:6px;height:522px;background:linear-gradient(to right, rgba(0,0,0,0.13), rgba(0,0,0,0));"></div>
<div class="r" style="left:0px;top:395px;width:224px;height:523px;background:#363636;"></div>
<div class="r" style="left:223px;top:395px;width:1px;height:523px;background:#2c2c2c;"></div>
<div class="t" style="left: 18.5px; top: 404.16px; font-size: 15.7px; color: rgb(255, 255, 255); font-weight: 700; transform: scaleX(0.9135);">fayansı</div>
<div class="t" style="left: 18.5px; top: 434.16px; font-size: 15.7px; color: rgb(255, 255, 255); font-weight: 700; transform: scaleX(0.9151);">fayans</div>
<div class="t" style="left: 18.5px; top: 464.16px; font-size: 15.7px; color: rgb(255, 255, 255); font-weight: 700; transform: scaleX(0.9155);">fayansa</div>
<div class="t" style="left: 18.5px; top: 494.16px; font-size: 15.7px; color: rgb(255, 255, 255); font-weight: 700; transform: scaleX(0.9263);">fayansım</div>
<div class="t" style="left: 18.5px; top: 524.16px; font-size: 15.7px; color: rgb(255, 255, 255); font-weight: 700; transform: scaleX(0.919);">fayansın</div>
<div class="r" style="left:19px;top:547.5px;width:204px;height:1px;background:#5a5a5a;"></div>
<div class="t" style="left: 18.5px; top: 557.16px; font-size: 15.7px; color: rgb(255, 255, 255); transform: scaleX(0.8985);"><u>T</u>ümünü Geç</div>
<div class="t" style="left: 18.5px; top: 587.16px; font-size: 15.7px; color: rgb(255, 255, 255); transform: scaleX(0.9096);"><u>S</u>özlüğe Ekle</div>
<div class="r" style="left:19px;top:610px;width:204px;height:1px;background:#5a5a5a;"></div>
<div class="t" style="left: 18.5px; top: 620.06px; font-size: 15.7px; color: rgb(255, 255, 255); transform: scaleX(0.9468);"><u>O</u>tomatik Düzeltmeye Ekle</div>
<svg class="r" style="left:205px;top:622px;" width="8" height="12" viewBox="0 0 8 12"><path d="M1 1 L6.5 5.5 L1 10Z" fill="#fff"></path></svg>
<div class="r" style="left:19px;top:643.5px;width:204px;height:1px;background:#5a5a5a;"></div>
<div class="t" style="left: 18.5px; top: 653.56px; font-size: 15.7px; color: rgb(255, 255, 255); transform: scaleX(0.8592);">B<u>u</u> Kim?...</div>
<div class="r" style="left:19px;top:676px;width:204px;height:1px;background:#5a5a5a;"></div>
<div class="t" style="left: 18.5px; top: 686.56px; font-size: 15.7px; color: rgb(255, 255, 255); transform: scaleX(0.8171);"><u>K</u>es</div>
<div class="t" style="left: 18.5px; top: 716.76px; font-size: 15.7px; color: rgb(255, 255, 255); transform: scaleX(0.9327);">K<u>o</u>pyala</div>
<div class="r" style="left:8px;top:739px;width:215px;height:29px;background:#484848;"></div>
<div class="t" style="left: 18.5px; top: 745.26px; font-size: 15.7px; color: rgb(255, 255, 255); font-weight: 700; transform: scaleX(0.9168);">Yapıştırma Seçenekleri:</div>
<svg class="r" style="left:17px;top:775px;" width="26" height="26" viewBox="0 0 26 26">
<rect x="1" y="3" width="18" height="20.5" rx="1.6" fill="#deb97a"></rect>
<rect x="3.4" y="4.6" width="13.4" height="17.6" fill="#ececec"></rect>
<rect x="5" y="2.4" width="10" height="3.4" rx="0.8" fill="#6a6a6a"></rect>
<rect x="8.2" y="0.8" width="3.6" height="2.6" rx="1" fill="#6a6a6a"></rect>
<path d="M5 8.8H15M5 11.4H15M5 14H15M5 16.6H11" stroke="#3a8ee6" stroke-width="1.1"></path>
<text x="10.2" y="19.8" font-family="Liberation Sans" font-weight="700" font-size="12" fill="#bdbdbd" stroke="#363636" stroke-width="1.6" paint-order="stroke">a</text>
<rect x="10" y="20.8" width="3.2" height="3.2" fill="#d24726"></rect><rect x="14" y="20.8" width="3.2" height="3.2" fill="#41a07a"></rect><rect x="18" y="20.8" width="3.2" height="3.2" fill="#e8731c"></rect></svg>
<svg class="r" style="left:55px;top:775px;" width="26" height="26" viewBox="0 0 26 26">
<rect x="1" y="3" width="18" height="20.5" rx="1.6" fill="#deb97a"></rect>
<rect x="3.4" y="4.6" width="13.4" height="17.6" fill="#ececec"></rect>
<rect x="5" y="2.4" width="10" height="3.4" rx="0.8" fill="#6a6a6a"></rect>
<rect x="8.2" y="0.8" width="3.6" height="2.6" rx="1" fill="#6a6a6a"></rect>
<path d="M5 14.4H15M5 17H10" stroke="#3a8ee6" stroke-width="1.1"></path>
<path d="M5 10.2 L6 11.8 L7 10.2 L8 11.8 L9 10.2 L10 11.8 L11 10.2 L12 11.8 L13 10.2 L14 11.8 L15 10.2 M5 11.8 L6 10.2 L7 11.8 L8 10.2 L9 11.8 L10 10.2 L11 11.8 L12 10.2 L13 11.8 L14 10.2 L15 11.8" stroke="#d24726" stroke-width="0.8" fill="none"></path>
<path d="M22.5 12 L14.5 19.5" stroke="#363636" stroke-width="4.6"></path>
<path d="M22.5 12 L14.5 19.5" stroke="#a8a8a8" stroke-width="2.8"></path>
<path d="M15.5 17.5 Q9 18.5 4.5 24.2 Q12 24.2 16.8 20 Z" fill="#3a8ee6" stroke="#363636" stroke-width="0.8"></path></svg>
<svg class="r" style="left:93px;top:775px;" width="26" height="26" viewBox="0 0 26 26">
<rect x="1" y="3" width="18" height="20.5" rx="1.6" fill="#deb97a"></rect>
<rect x="3.4" y="4.6" width="13.4" height="17.6" fill="#ececec"></rect>
<rect x="5" y="2.4" width="10" height="3.4" rx="0.8" fill="#6a6a6a"></rect>
<rect x="8.2" y="0.8" width="3.6" height="2.6" rx="1" fill="#6a6a6a"></rect>
<path d="M10.5 16.6 Q10.5 21 15 21 H19.5" fill="none" stroke="#363636" stroke-width="4.4"></path>
<path d="M10.5 16.6 Q10.5 21 15 21 H19.5" fill="none" stroke="#2f7fd3" stroke-width="2.4"></path>
<path d="M18.5 16.8 L23.2 20.9 L18.5 25Z" fill="#2f7fd3"></path></svg>
<svg class="r" style="left:131px;top:775px;" width="26" height="26" viewBox="0 0 26 26">
<rect x="1" y="3" width="18" height="20.5" rx="1.6" fill="#deb97a"></rect>
<rect x="3.4" y="4.6" width="13.4" height="17.6" fill="#ececec"></rect>
<rect x="5" y="2.4" width="10" height="3.4" rx="0.8" fill="#6a6a6a"></rect>
<rect x="8.2" y="0.8" width="3.6" height="2.6" rx="1" fill="#6a6a6a"></rect>
<rect x="8" y="11" width="14.2" height="13.2" fill="#ececec" stroke="#363636" stroke-width="1.2"></rect>
<rect x="8.6" y="11.6" width="13" height="12" fill="none" stroke="#9a9a9a" stroke-width="0.6"></rect>
<path d="M10 22 L13.6 17.4 L16 20 L17.6 18.6 L20.5 22Z" fill="#3a8ee6"></path><circle cx="18" cy="14.6" r="1.4" fill="#e8b060"></circle></svg>
<svg class="r" style="left:169px;top:775px;" width="26" height="26" viewBox="0 0 26 26">
<rect x="1" y="3" width="18" height="20.5" rx="1.6" fill="#deb97a"></rect>
<rect x="3.4" y="4.6" width="13.4" height="17.6" fill="#ececec"></rect>
<rect x="5" y="2.4" width="10" height="3.4" rx="0.8" fill="#6a6a6a"></rect>
<rect x="8.2" y="0.8" width="3.6" height="2.6" rx="1" fill="#6a6a6a"></rect>
<path d="M10.8 23.6 L16 11.6 L21.2 23.6 M12.8 19.3H19.2" fill="none" stroke="#363636" stroke-width="4.2"></path>
<path d="M10.8 23.6 L16 11.6 L21.2 23.6 M12.8 19.3H19.2" fill="none" stroke="#ececec" stroke-width="2.2"></path></svg>
<div class="r" style="left:19px;top:806px;width:204px;height:1px;background:#5a5a5a;"></div>
<div class="t" style="left: 18.5px; top: 816.76px; font-size: 15.7px; color: rgb(255, 255, 255); transform: scaleX(0.9407);">"fayansi" <u>A</u>ra</div>
<div class="t" style="left: 18.5px; top: 846.56px; font-size: 15.7px; color: rgb(255, 255, 255); transform: scaleX(0.8783);">Ses<u>l</u>i Oku</div>
<div class="t" style="left: 18.5px; top: 877.16px; font-size: 15.7px; color: rgb(255, 255, 255); transform: scaleX(0.8737);">Çe<u>v</u>ir</div>
<div class="r" style="left:19px;top:899.5px;width:204px;height:1px;background:#5a5a5a;"></div>
<div class="t" style="left: 18.5px; top: 908.56px; font-size: 15.7px; color: rgb(255, 255, 255); transform: scaleX(0.9292);">Bağlantı</div>
<div class="r" style="left:0px;top:721px;width:1.6px;height:10.5px;background:#8e8e8e;"></div>
<svg class="r" style="left:0px;top:750px;" width="4" height="13" viewBox="0 0 4 13"><path d="M0 1.5 H1.5 L3.2 3.3 V12 H0Z" fill="#e6e6e6"></path></svg>
<svg class="r" style="left:0px;top:815px;" width="4" height="12" viewBox="0 0 4 12"><circle cx="-1.2" cy="5.8" r="4.4" fill="#3a82d0"></circle></svg>
<svg class="r" style="left:0px;top:844px;" width="4" height="14" viewBox="0 0 4 14"><path d="M0 1.5 Q3.2 4 3.2 7 Q3.2 10 0 12.5" fill="none" stroke="#d0d0d0" stroke-width="1.1"></path></svg>
<svg class="r" style="left:0px;top:878px;" width="5" height="17" viewBox="0 0 5 17"><path d="M0.5 1.5 L2.5 3.5 L0.5 5.5" fill="none" stroke="#3a82d0" stroke-width="1.1"></path><path d="M3.2 9 Q0 8.6 0.8 11.3 Q3.4 12 3 14.6 Q2 16 0 15.2" fill="none" stroke="#d0d0d0" stroke-width="1.1"></path></svg>
</body></html>
